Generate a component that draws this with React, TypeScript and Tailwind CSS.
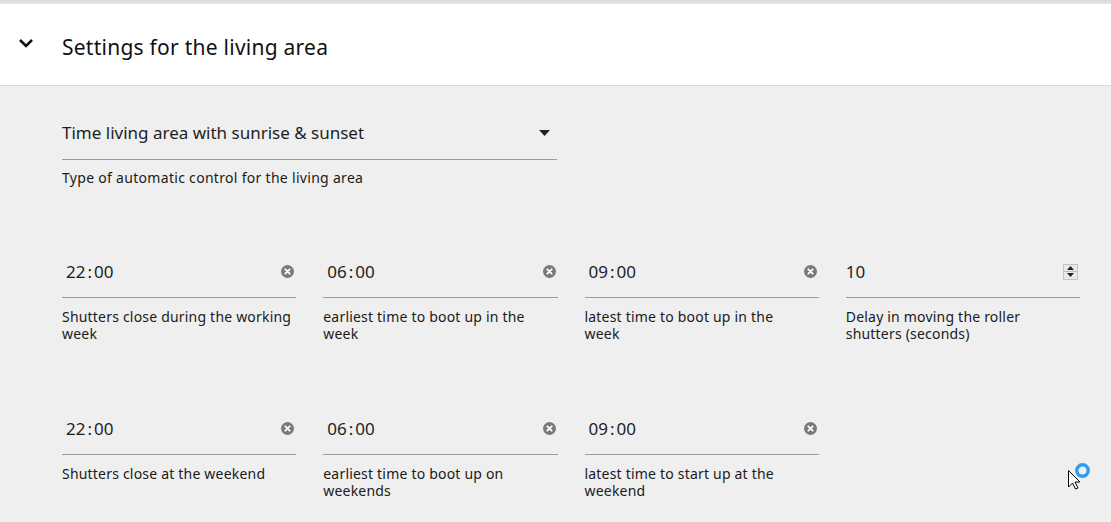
import React from "react";

const ClearIcon = () => (
  <svg width="13" height="13" viewBox="0 0 13 13" className="shrink-0">
    <circle cx="6.5" cy="6.5" r="6.5" fill="#7a7a7a" />
    <path d="M4.3 4.3 L8.7 8.7 M8.7 4.3 L4.3 8.7" stroke="#ffffff" strokeWidth="1.8" strokeLinecap="round" />
  </svg>
);

const Spinner = () => (
  <div className="flex flex-col w-[15px] h-[16px] border border-[#c4c4c4] bg-[#e9e9e9]">
    <div className="flex-1 flex items-center justify-center border-b border-[#bdbdbd]">
      <svg width="7" height="4" viewBox="0 0 7 4"><path d="M0 4 L3.5 0 L7 4 Z" fill="#222" /></svg>
    </div>
    <div className="flex-1 flex items-center justify-center">
      <svg width="7" height="4" viewBox="0 0 7 4"><path d="M0 0 L3.5 4 L7 0 Z" fill="#222" /></svg>
    </div>
  </div>
);

const TimeValue = ({ h, m }: { h: string; m: string }) => (
  <span className="flex items-baseline pl-[4px]">
    <span className="pr-[2px]">{h}</span>
    <span>:</span>
    <span className="pl-[2px]">{m}</span>
  </span>
);

const Field = ({
  children,
  icon,
  label,
}: {
  children: React.ReactNode;
  icon: React.ReactNode;
  label: React.ReactNode;
}) => (
  <div className="flex flex-col">
    <div className="flex items-center justify-between h-[46px] border-b border-[#9c9c9c] pr-[2px] pb-[6px] text-[17px] text-[#1e1e1e] font-['Noto_Sans',sans-serif]">
      {children}
      {icon}
    </div>
    <div className="pt-[10px] text-[14px] leading-[17px] tracking-[0.2px] text-[#1a1a1a] font-['Noto_Sans',sans-serif]">
      {label}
    </div>
  </div>
);

export default function App() {
  return (
    <div className="w-[1111px] h-[522px] overflow-hidden bg-[#efefef] relative">
      <div className="h-[4px] bg-gradient-to-b from-[#d6d6d6] to-[#e8e8e8]" />
      <div className="h-[82px] bg-white border-b border-[#d9d9d9] flex items-center pl-[18px] pt-[6px]">
        <svg width="16" height="12" viewBox="0 0 16 12" className="mr-[28px] mb-[9px]">
          <path d="M2 3 L8 9 L14 3" stroke="#111" strokeWidth="2.6" fill="none" />
        </svg>
        <span className="text-[21px] text-[#111] font-['Noto_Sans',sans-serif] tracking-[0.25px]">
          Settings for the living area
        </span>
      </div>

      <div className="pl-[62px] pr-[31px] pt-[27px]">
        <div className="w-[495px] flex flex-col">
          <div className="flex items-center justify-between h-[47px] border-b border-[#9c9c9c] pr-[7px] pb-[7px] text-[17px] text-[#1e1e1e] font-['Noto_Sans',sans-serif]">
            <span>Time living area with sunrise &amp; sunset</span>
            <svg width="11" height="6" viewBox="0 0 11 6"><path d="M0 0 L11 0 L5.5 6 Z" fill="#222" /></svg>
          </div>
          <div className="pt-[9px] text-[14px] leading-[17px] tracking-[0.3px] text-[#1a1a1a] font-['Noto_Sans',sans-serif]">
            Type of automatic control for the living area
          </div>
        </div>

        <div className="grid grid-cols-4 gap-x-[27px] mt-[66px]">
          <Field icon={<ClearIcon />} label={<>Shutters close during the working<br />week</>}>
            <TimeValue h="22" m="00" />
          </Field>
          <Field icon={<ClearIcon />} label={<>earliest time to boot up in the<br />week</>}>
            <TimeValue h="06" m="00" />
          </Field>
          <Field icon={<ClearIcon />} label={<>latest time to boot up in the<br />week</>}>
            <TimeValue h="09" m="00" />
          </Field>
          <Field icon={<Spinner />} label={<>Delay in moving the roller<br />shutters (seconds)</>}>
            <span>10</span>
          </Field>
        </div>

        <div className="grid grid-cols-4 gap-x-[27px] mt-[67px]">
          <Field icon={<ClearIcon />} label={<>Shutters close at the weekend</>}>
            <TimeValue h="22" m="00" />
          </Field>
          <Field icon={<ClearIcon />} label={<>earliest time to boot up on<br />weekends</>}>
            <TimeValue h="06" m="00" />
          </Field>
          <Field icon={<ClearIcon />} label={<>latest time to start up at the<br />weekend</>}>
            <TimeValue h="09" m="00" />
          </Field>
        </div>
      </div>

      <svg width="30" height="30" viewBox="0 0 30 30" className="absolute left-[1066px] top-[462px]">
        <path d="M2.5 8.5 L2.5 25 L6.5 21 L9.5 27 L12 26 L9 20 L14 20 Z" fill="#fff" stroke="#000" strokeWidth="1" strokeLinejoin="round" />
        <circle cx="16.5" cy="8.5" r="5.7" fill="none" stroke="#2f9bf0" strokeWidth="3.4" />
      </svg>
    </div>
  );
}
